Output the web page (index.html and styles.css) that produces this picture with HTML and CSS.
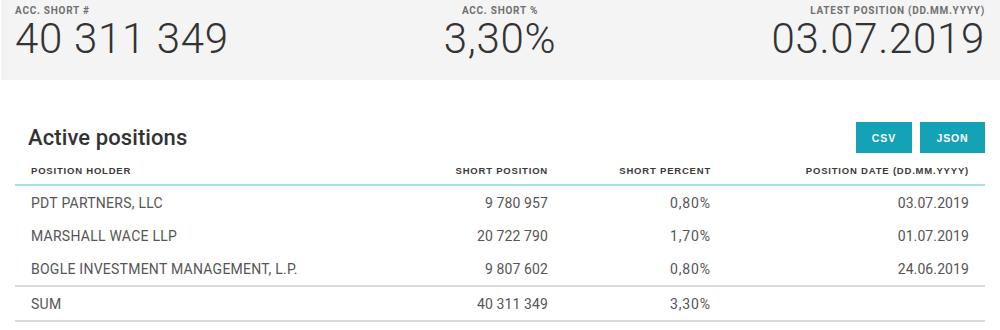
FILE: index.html
```html
<!DOCTYPE html>
<html>
<head>
<meta charset="utf-8">
<link rel="stylesheet" href="styles.css">
</head>
<body>
<div class="stats">
  <div class="stat stat-left">
    <div class="stat-label">ACC. SHORT #</div>
    <div class="stat-value">40 311 349</div>
  </div>
  <div class="stat stat-center">
    <div class="stat-label">ACC. SHORT %</div>
    <div class="stat-value">3,30%</div>
  </div>
  <div class="stat stat-right">
    <div class="stat-label">LATEST POSITION (DD.MM.YYYY)</div>
    <div class="stat-value">03.07.2019</div>
  </div>
</div>
<div class="section">
  <div class="title-row">
    <h2 class="title">Active positions</h2>
    <div class="buttons">
      <button class="btn">CSV</button>
      <button class="btn">JSON</button>
    </div>
  </div>
  <table class="positions">
    <colgroup>
      <col class="c1"><col class="c2"><col class="c3"><col class="c4">
    </colgroup>
    <thead>
      <tr>
        <th class="left">POSITION HOLDER</th>
        <th>SHORT POSITION</th>
        <th>SHORT PERCENT</th>
        <th>POSITION DATE (DD.MM.YYYY)</th>
      </tr>
    </thead>
    <tbody>
      <tr><td class="left">PDT PARTNERS, LLC</td><td class="num">9 780 957</td><td class="pct">0,80%</td><td class="num">03.07.2019</td></tr>
      <tr><td class="left">MARSHALL WACE LLP</td><td class="num">20 722 790</td><td class="pct">1,70%</td><td class="num">01.07.2019</td></tr>
      <tr class="last"><td class="left">BOGLE INVESTMENT MANAGEMENT, L.P.</td><td class="num">9 807 602</td><td class="pct">0,80%</td><td class="num">24.06.2019</td></tr>
    </tbody>
    <tfoot>
      <tr><td class="left">SUM</td><td class="num">40 311 349</td><td class="pct">3,30%</td><td></td></tr>
    </tfoot>
  </table>
</div>
</body>
</html>
```

FILE: styles.css
```css
html, body {
  margin: 0;
  padding: 0;
  background: #ffffff;
  font-family: Roboto, "Liberation Sans", Arial, sans-serif;
  color: #333;
}

.stats {
  margin-left: 1px;
  height: 80px;
  background: #f4f4f4;
  display: grid;
  grid-template-columns: 1fr 1fr 1fr;
  padding: 0 15px 0 14px;
  box-sizing: border-box;
}

.stat {
  padding-top: 5px;
}

.stat-center { text-align: center; }
.stat-right { text-align: right; }

.stat-label {
  font-size: 10px;
  font-weight: 700;
  color: #707070;
  letter-spacing: 0.75px;
  line-height: 11px;
}

.stat-value {
  font-size: 42px;
  font-weight: 300;
  color: #333;
  line-height: 44px;
  margin-top: 1px;
  letter-spacing: 0.7px;
}

.section {
  padding: 42px 15px 0 15px;
}

.title-row {
  display: flex;
  justify-content: space-between;
  align-items: center;
  height: 31px;
}

.title {
  margin: 0 0 0 13px;
  font-size: 22px;
  font-weight: 500;
  color: #333;
  letter-spacing: 0.1px;
}

.buttons {
  display: flex;
  gap: 8px;
}

.btn {
  height: 31px;
  border: none;
  background: #13a2b6;
  color: #ffffff;
  font-family: "Liberation Sans", Arial, sans-serif;
  font-weight: 700;
  font-size: 10.5px;
  padding: 0;
  letter-spacing: 0.9px;
}

.btn:first-child { width: 56px; }
.btn:last-child { width: 65px; }

.positions {
  width: 970px;
  border-collapse: collapse;
  table-layout: fixed;
  margin-top: 3px;
}

.c1 { width: 385px; }
.c2 { width: 164px; }
.c3 { width: 163px; }
.c4 { width: 258px; }

.positions th,
.positions td {
  padding: 0 16px;
  text-align: right;
  white-space: nowrap;
}

.positions th {
  height: 28px;
  font-family: "Liberation Sans", Arial, sans-serif;
  font-size: 9.5px;
  font-weight: 700;
  color: #3a3a3a;
  letter-spacing: 0.8px;
  border-bottom: 2px solid #a9dfe8;
  vertical-align: middle;
}

.positions td {
  height: 33px;
  font-size: 14px;
  color: #555;
  letter-spacing: 0.25px;
  vertical-align: middle;
}

.positions td.num {
  letter-spacing: 0.1px;
}

.positions td.pct {
  letter-spacing: 0.9px;
}

.positions .left { text-align: left; }

.positions tr.last td {
  border-bottom: 2px solid #d9d9d9;
}

.positions tfoot td {
  border-bottom: 2px solid #d9d9d9;
}
```
